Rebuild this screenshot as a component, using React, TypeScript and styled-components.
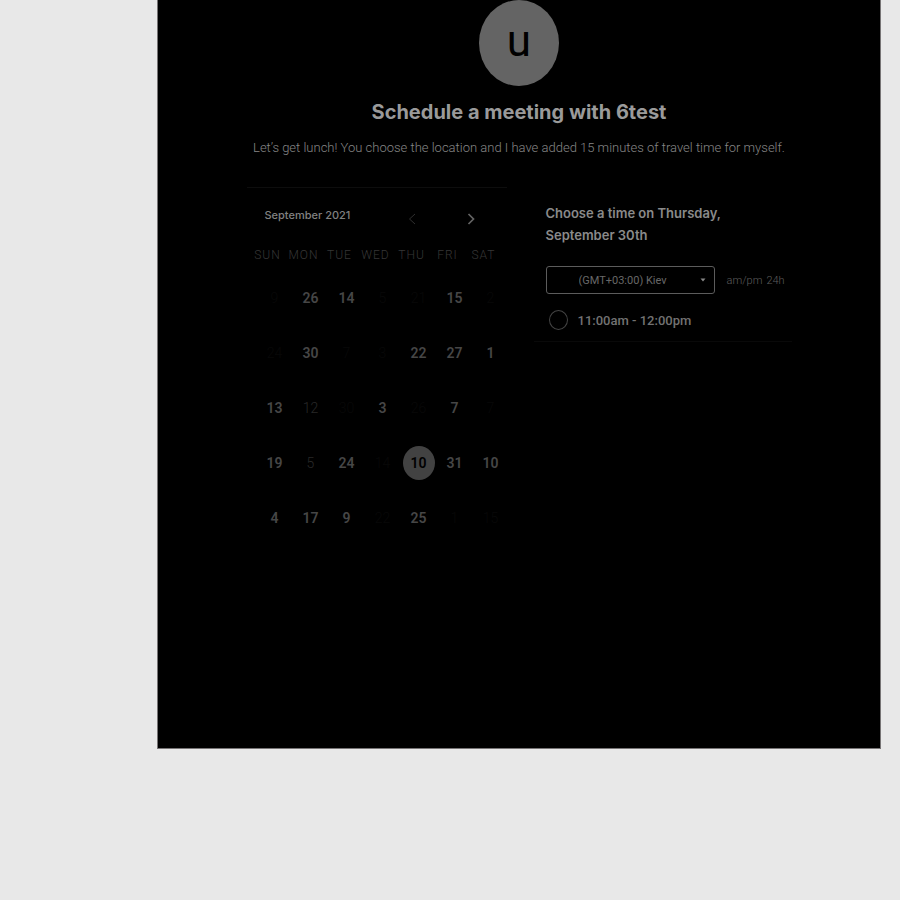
import React, { useState } from "react";
import styled, { createGlobalStyle } from "styled-components";

const GlobalStyle = createGlobalStyle`
  * { box-sizing: border-box; }
  body {
    margin: 0;
    background: #e8e8e8;
    font-family: Roboto, sans-serif;
    font-weight: 300;
  }
  button, select { font: inherit; color: inherit; }
`;

const Page = styled.div`
  min-height: 100vh;
  padding: 0 19px 20px 157px;
`;

const Panel = styled.main`
  min-height: calc(100vh - 151px);
  background: #000;
  border: 1px solid #777475;
  border-top: 0;
  display: flex;
  flex-direction: column;
  align-items: center;
`;

const Avatar = styled.div`
  width: 80px;
  height: 86px;
  margin-bottom: 12px;
  border-radius: 50%;
  background: #646464;
  color: #000;
  font-size: 44px;
  line-height: 82px;
  font-weight: 400;
  text-align: center;
`;

const Title = styled.h1`
  margin: 0;
  font: 700 20px/28px Inter, sans-serif;
  color: #9a9a9a;
`;

const Intro = styled.p`
  margin: 12px 0 29px;
  font-size: 13px;
  line-height: 20px;
  color: #868686;
`;

const Columns = styled.div`
  width: 100%;
  max-width: 545px;
  display: grid;
  grid-template-columns: 260px 1fr;
  column-gap: 39px;
  align-items: start;
`;

const Calendar = styled.section`
  border-top: 1px solid #0d0d0d;
  padding: 17px 3px 0;
`;

const MonthBar = styled.div`
  display: flex;
  align-items: center;
  height: 20px;
  padding: 0 23px 0 15px;
`;

const Month = styled.h2`
  margin: 0 auto 0 0;
  font: 500 11px/20px Inter, sans-serif;
  color: #808080;
`;

const Arrow = styled.button<{ $tone: string }>`
  width: 20px;
  height: 20px;
  margin: 8px 0 0 39px;
  padding: 0;
  display: flex;
  align-items: center;
  justify-content: center;
  border: 0;
  background: none;
  color: ${(p) => p.$tone};
`;

const MonthTable = styled.table`
  width: 252px;
  margin-top: 17px;
  table-layout: fixed;
  border-collapse: collapse;
`;

const WeekDay = styled.th`
  height: 26px;
  padding: 0;
  font-size: 12px;
  font-weight: 300;
  letter-spacing: 1px;
  color: #363636;
`;

const DayCell = styled.td`
  height: 55px;
  padding: 4px 0 0 14px;
`;

type Kind = "open" | "dim" | "off" | "picked";

const tones: Record<Kind, string> = {
  open: "#464646",
  dim: "#282828",
  off: "#080808",
  picked: "#000",
};

const Day = styled.button<{ $kind: Kind }>`
  width: 32px;
  height: 34px;
  margin-left: -5px;
  display: block;
  padding: 0;
  border: 0;
  border-radius: 50%;
  background: ${(p) => (p.$kind === "picked" ? "#424242" : "none")};
  color: ${(p) => tones[p.$kind]};
  font-size: 14px;
  font-weight: ${(p) => (p.$kind === "open" || p.$kind === "picked" ? 600 : 300)};
  text-align: center;
`;

const Times = styled.section`
  padding-top: 15px;
`;

const TimesTitle = styled.h2`
  max-width: 200px;
  margin: 0 0 20px;
  font: 600 13px/22px Inter, sans-serif;
  color: #8a8a8a;
`;

const ZoneRow = styled.div`
  display: flex;
  align-items: center;
  font-size: 11px;
  color: #606060;
`;

const ZoneBox = styled.div`
  position: relative;
  width: 169px;
  margin-right: 12px;
`;

const ZoneSelect = styled.select`
  display: block;
  width: 100%;
  height: 28px;
  padding: 0 28px 0 32px;
  appearance: none;
  border: 1px solid #5c5c5c;
  border-radius: 3px;
  background: #000;
  color: #686868;
  font-weight: 400;
`;

const Caret = styled.svg`
  position: absolute;
  right: 9px;
  top: 12px;
  pointer-events: none;
`;

const Format = styled.button`
  margin-right: 4px;
  padding: 0;
  border: 0;
  background: none;
  font-size: 11px;
  color: #5c5c5c;
  white-space: nowrap;
`;

const Slot = styled.label`
  display: flex;
  align-items: center;
  gap: 10px;
  height: 48px;
  margin-left: -12px;
  padding: 5px 0 0 15px;
  border-bottom: 1px solid #090909;
  font-size: 13px;
  font-weight: 500;
  color: #727272;
`;

const Radio = styled.input`
  appearance: none;
  width: 19px;
  height: 20px;
  margin: 0;
  border: 1px solid #444;
  border-radius: 50%;
  &:checked { background: #646464; }
`;

const weekDays = ["SUN", "MON", "TUE", "WED", "THU", "FRI", "SAT"];

const weeks: [number, Kind][][] = [
  [[9, "off"], [26, "open"], [14, "open"], [5, "off"], [21, "off"], [15, "open"], [2, "off"]],
  [[24, "off"], [30, "open"], [7, "off"], [3, "off"], [22, "open"], [27, "open"], [1, "open"]],
  [[13, "open"], [12, "dim"], [30, "off"], [3, "open"], [26, "off"], [7, "open"], [7, "off"]],
  [[19, "open"], [5, "dim"], [24, "open"], [14, "off"], [10, "picked"], [31, "open"], [10, "open"]],
  [[4, "open"], [17, "open"], [9, "open"], [22, "off"], [25, "open"], [1, "off"], [15, "off"]],
];

export default function App() {
  const [picked, setPicked] = useState(false);
  return (
    <>
      <GlobalStyle />
      <Page>
        <Panel>
          <Avatar>u</Avatar>
          <Title>Schedule a meeting with 6test</Title>
          <Intro>
            Let’s get lunch! You choose the location and I have added 15 minutes of travel time for myself.
          </Intro>
          <Columns>
            <Calendar>
              <MonthBar>
                <Month>September 2021</Month>
                <Arrow $tone="#303030" aria-label="Previous month">
                  <svg width="8" height="12" viewBox="0 0 8 12" fill="none" stroke="currentColor">
                    <path d="M7 1L1.5 6L7 11" />
                  </svg>
                </Arrow>
                <Arrow $tone="#646464" aria-label="Next month">
                  <svg width="8" height="12" viewBox="0 0 8 12" fill="none" stroke="currentColor" strokeWidth="1.7">
                    <path d="M1.5 1L6.5 6L1.5 11" />
                  </svg>
                </Arrow>
              </MonthBar>
              <MonthTable>
                <thead>
                  <tr>
                    {weekDays.map((d) => (
                      <WeekDay key={d} scope="col">{d}</WeekDay>
                    ))}
                  </tr>
                </thead>
                <tbody>
                  {weeks.map((week, i) => (
                    <tr key={i}>
                      {week.map(([day, kind], j) => (
                        <DayCell key={j}>
                          <Day $kind={kind}>{day}</Day>
                        </DayCell>
                      ))}
                    </tr>
                  ))}
                </tbody>
              </MonthTable>
            </Calendar>
            <Times>
              <TimesTitle>Choose a time on Thursday, September 30th</TimesTitle>
              <ZoneRow>
                <ZoneBox>
                  <ZoneSelect aria-label="Time zone">
                    <option>(GMT+03:00) Kiev</option>
                  </ZoneSelect>
                  <Caret width="6" height="4" viewBox="0 0 6 4" fill="#888">
                    <path d="M0.5 0.5H5.5L3 3.5Z" />
                  </Caret>
                </ZoneBox>
                <Format>am/pm</Format>
                <Format>24h</Format>
              </ZoneRow>
              <Slot>
                <Radio type="radio" name="slot" checked={picked} onChange={() => setPicked(true)} />
                11:00am - 12:00pm
              </Slot>
            </Times>
          </Columns>
        </Panel>
      </Page>
    </>
  );
}
